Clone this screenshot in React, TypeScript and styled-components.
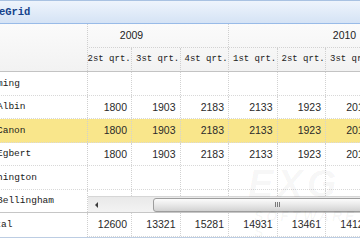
import * as React from 'react'
import styled, { createGlobalStyle } from 'styled-components';

const GlobalStyle = createGlobalStyle`
    html, body {
        margin: 0;
        padding: 0;
        background: #ffffff;
    }
    body {
        font-family: "Liberation Sans", Arial, sans-serif;
        color: #1f1f1f;
    }
`;

const Viewport = styled.div`
    position: relative;
    width: 360px;
    height: 240px;
    overflow: hidden;
    background: #ffffff;
`;

const Panel = styled.div`
    margin-left: -40px;
    width: 460px;
    display: flex;
    flex-direction: column;
    border-bottom: 1px solid #bccde3;
`;

const TitleBar = styled.div`
    height: 24px;
    box-sizing: border-box;
    display: flex;
    align-items: center;
    padding-left: 20px;
    border-top: 1px solid #a9c2e2;
    border-bottom: 1px solid #99bbe8;
    background: linear-gradient(#eef4fc, #d5e3f5);
`;

const TitleText = styled.span`
    font-family: "Liberation Mono", "Courier New", monospace;
    font-weight: bold;
    font-size: 10.5px;
    color: #15428b;
`;

const GridHeader = styled.div`
    display: flex;
    border-bottom: 1px solid #c3c3c3;
    background: linear-gradient(#fbfbfb, #f2f2f2);
`;

const LockedHeaderCell = styled.div`
    flex: 0 0 128px;
    height: 47px;
    box-sizing: border-box;
    border-right: 1px dotted #cfcfcf;
`;

const Pane = styled.div`
    flex: 1;
    min-width: 0;
    overflow: hidden;
`;

// every right-hand pane is scrolled by the same amount
const ScrollContent = styled.div`
    margin-left: -53px;
    display: flex;
    flex-direction: column;
`;

const HeaderRow = styled.div<{ $last?: boolean }>`
    display: flex;
    height: 23.5px;
    box-sizing: border-box;
    border-bottom: 1px dotted ${(p) => (p.$last ? 'transparent' : '#d2d2d2')};
`;

const GroupCell = styled.div<{ $width: number }>`
    flex: 0 0 ${(p) => p.$width}px;
    box-sizing: border-box;
    border-right: 1px dotted #cfcfcf;
    display: flex;
    align-items: center;
    justify-content: center;
    font-size: 10.5px;
    color: #222;
`;

const QuarterCell = styled.div`
    flex: 0 0 48.5px;
    box-sizing: border-box;
    border-right: 1px dotted #cfcfcf;
    display: flex;
    align-items: center;
    padding-left: 4px;
    white-space: nowrap;
    overflow: hidden;
    font-family: "Liberation Mono", "Courier New", monospace;
    font-size: 9px;
    color: #222;
`;

const GridBody = styled.div`
    display: flex;
    height: 140px;
`;

const LockedBody = styled.div`
    flex: 0 0 128px;
    display: flex;
    flex-direction: column;
    overflow: hidden;
`;

const ScrollPane = styled.div`
    flex: 1;
    min-width: 0;
    display: flex;
    flex-direction: column;
    overflow: hidden;
`;

const RowsViewport = styled.div`
    flex: 1;
    overflow: hidden;
`;

const Row = styled.div<{ $selected?: boolean }>`
    display: flex;
    flex: 0 0 23.5px;
    height: 23.5px;
    box-sizing: border-box;
    border-bottom: 1px dotted #d8d8d8;
    background: ${(p) => (p.$selected ? '#f9e68b' : 'transparent')};
`;

const NameCell = styled.div<{ $indent: number }>`
    flex: 1;
    box-sizing: border-box;
    border-right: 1px dotted #cfcfcf;
    display: flex;
    align-items: center;
    padding-left: ${(p) => p.$indent}px;
    white-space: nowrap;
    font-family: "Liberation Mono", "Courier New", monospace;
    font-size: 9.5px;
    color: #1a1a1a;
`;

const NumCell = styled.div`
    flex: 0 0 48.5px;
    box-sizing: border-box;
    border-right: 1px dotted #d2d2d2;
    display: flex;
    align-items: center;
    justify-content: flex-end;
    padding-right: 4px;
    font-size: 10.5px;
    color: #2a2a2a;
`;

const HScrollbar = styled.div`
    flex: 0 0 16px;
    display: flex;
    align-items: center;
    box-sizing: border-box;
    border-top: 1px solid #d6d6d6;
    background: linear-gradient(#e9e9e9, #f3f3f3);
`;

const ArrowButton = styled.div`
    flex: 0 0 16px;
    display: flex;
    align-items: center;
    justify-content: center;
    &::before {
        content: '';
        width: 0;
        height: 0;
        border-top: 3px solid transparent;
        border-bottom: 3px solid transparent;
        border-right: 3px solid #3c3c3c;
    }
`;

const Thumb = styled.div`
    margin-left: 49px;
    flex: 0 0 248px;
    height: 14px;
    box-sizing: border-box;
    border: 1px solid #9d9d9d;
    border-radius: 3px;
    background: linear-gradient(#fbfbfb, #e8e8e8 50%, #d2d2d2);
    display: flex;
    align-items: center;
    justify-content: center;
    gap: 1px;
`;

const Grip = styled.span`
    width: 1px;
    height: 5px;
    background: #7a7a7a;
`;

const SummaryRow = styled.div`
    display: flex;
    height: 24.5px;
    box-sizing: border-box;
    border-top: 1px solid #c6c6c6;
`;

const LockedSummary = styled.div`
    flex: 0 0 128px;
    display: flex;
`;

const Watermark = styled.div`
    position: absolute;
    left: 226px;
    top: 164px;
    display: flex;
    flex-direction: column;
    pointer-events: none;
    font-family: "Liberation Sans", Arial, sans-serif;
    font-style: italic;
    font-weight: bold;
    color: rgba(0, 0, 0, 0.04);
`;

const WatermarkBig = styled.span`
    font-size: 38px;
    letter-spacing: 4px;
    line-height: 40px;
    padding-left: 22px;
`;

const WatermarkSmall = styled.span`
    font-size: 14px;
    letter-spacing: 3px;
    padding-left: 28px;
    margin-top: 4px;
`;

interface GridRow {
    name: string;
    level: number;
    values: number[];
    selected?: boolean;
}

const quarters = ['1st qrt.', '2st qrt.', '3st qrt.', '4st qrt.'];
const years = [
    { year: '2009', width: 194 },
    { year: '2010', width: 232 },
];

const town = [1650, 1800, 1903, 2183, 2133, 1923, 2013, 2240];

const rows: GridRow[] = [
    { name: 'Wyoming', level: 0, values: [] },
    { name: 'Albin', level: 1, values: town },
    { name: 'Canon', level: 1, values: town, selected: true },
    { name: 'Egbert', level: 1, values: town },
    { name: 'Washington', level: 0, values: [] },
    { name: 'Bellingham', level: 1, values: [1710, 2560, 2390, 2710, 2380, 2410, 2350, 2290] },
];

const totals = [11210, 12600, 13321, 15281, 14931, 13461, 14123, 15010];

const indentFor = (level: number) => (level === 0 ? 20 : 37);

export default function App() {
    return (
        <Viewport>
            <GlobalStyle />
            <Panel>
                <TitleBar>
                    <TitleText>TreeGrid</TitleText>
                </TitleBar>

                <GridHeader>
                    <LockedHeaderCell />
                    <Pane>
                        <ScrollContent>
                            <HeaderRow>
                                {years.map(y => (
                                    <GroupCell key={y.year} $width={y.width}>{y.year}</GroupCell>
                                ))}
                            </HeaderRow>
                            <HeaderRow $last>
                                {years.map(y =>
                                    quarters.map(q => <QuarterCell key={y.year + q}>{q}</QuarterCell>)
                                )}
                            </HeaderRow>
                        </ScrollContent>
                    </Pane>
                </GridHeader>

                <GridBody>
                    <LockedBody>
                        {rows.map(r => (
                            <Row key={r.name} $selected={r.selected}>
                                <NameCell $indent={indentFor(r.level)}>{r.name}</NameCell>
                            </Row>
                        ))}
                    </LockedBody>
                    <ScrollPane>
                        <RowsViewport>
                            <ScrollContent>
                                {rows.map(r => (
                                    <Row key={r.name} $selected={r.selected}>
                                        {Array.from({ length: 8 }).map((_, i) => (
                                            <NumCell key={i}>{r.values[i] ?? ''}</NumCell>
                                        ))}
                                    </Row>
                                ))}
                            </ScrollContent>
                        </RowsViewport>
                        <HScrollbar>
                            <ArrowButton />
                            <Thumb>
                                <Grip />
                                <Grip />
                                <Grip />
                            </Thumb>
                        </HScrollbar>
                    </ScrollPane>
                </GridBody>

                <SummaryRow>
                    <LockedSummary>
                        <NameCell $indent={24}>Total</NameCell>
                    </LockedSummary>
                    <Pane>
                        <ScrollContent>
                            <Row>
                                {totals.map((t, i) => (
                                    <NumCell key={i}>{t}</NumCell>
                                ))}
                            </Row>
                        </ScrollContent>
                    </Pane>
                </SummaryRow>
            </Panel>
            <Watermark>
                <WatermarkBig>EXG</WatermarkBig>
                <WatermarkSmall>SOFTWARE S</WatermarkSmall>
            </Watermark>
        </Viewport>
    )
}
